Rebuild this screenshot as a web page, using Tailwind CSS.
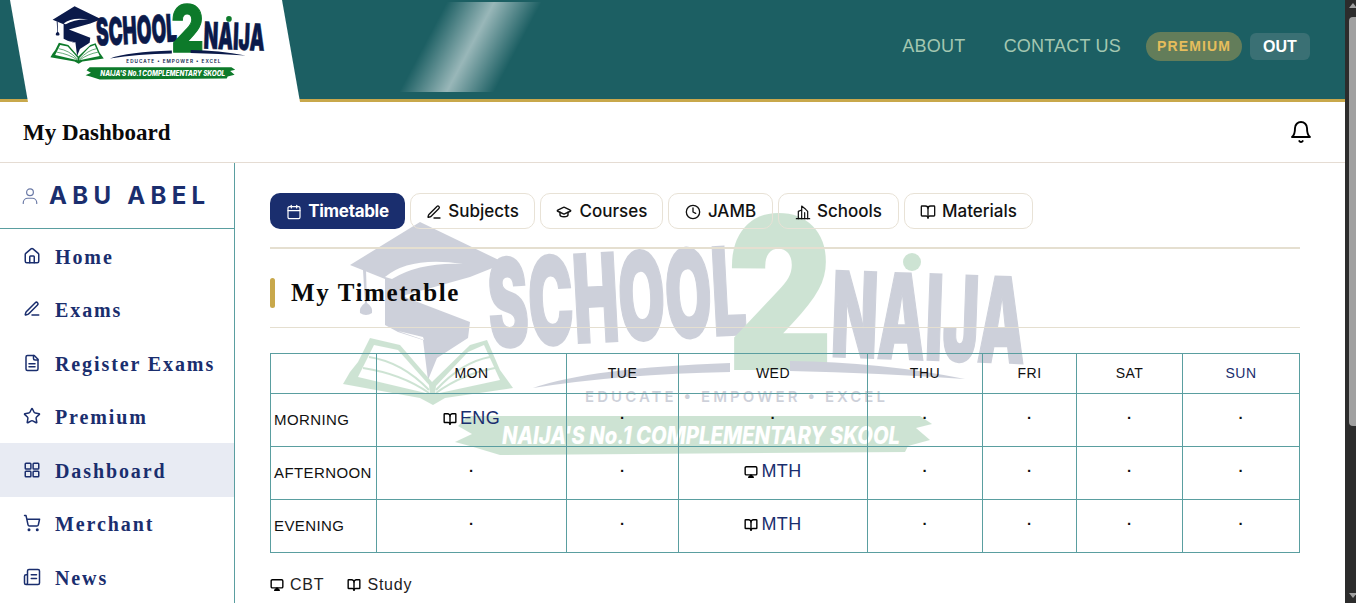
<!DOCTYPE html>
<html lang="en">
<head>
  <meta charset="UTF-8" />
  <meta name="viewport" content="width=device-width, initial-scale=1" />
  <title>My Dashboard</title>
  <script src="https://cdn.jsdelivr.net/npm/@tailwindcss/browser@4"></script>
</head>
<body class="h-[603px] overflow-hidden bg-white font-['Inter',sans-serif]">

  <!-- logo, used in the header and as the page watermark -->
  <svg class="hidden">
    <symbol id="logo" viewBox="340 205 695 255">
      <!-- cap and S body -->
      <path class="fill-[#0b1a4a]" d="M350 265 L420 222 L505 263 L470 277 L402 296 L470 322 L468 338 L437 358 L428 380 L423 340 L398 332 L385 325 L385 279 Z" />
      <path class="fill-white" d="M385 277 Q410 256 463 264 Q420 262 392 279 Z" />
      <path class="fill-white" d="M398 331 L423 337 L424 340 Z" />
      <path class="fill-[#0b1a4a]" d="M363 270 h3 l1 33 q6 4 5 10 q-6 4 -12 0 q-1 -6 5 -10 Z" />
      <!-- book -->
      <path class="fill-[#0d7a2a]" d="M370 338 L400 345 L432 382 L470 345 L487 340 L500 370 L513 388 L445 398 L433 405 L420 398 L343 384 L350 372 L358 362 Z" />
      <path class="fill-white" d="M374 345 L398 350 L429 385 L430 394 L358 377 Z" />
      <path class="fill-white" d="M484 345 L468 352 L436 386 L435 394 L500 380 Z" />
      <path fill="none" stroke="#0d7a2a" stroke-width="2" d="M369 357 Q402 362 429 390 M363 368 Q402 374 429 393 M490 357 Q462 362 436 390 M495 368 Q462 374 436 393" />
      <!-- wordmark -->
      <text x="488" y="342" textLength="258" lengthAdjust="spacingAndGlyphs" transform="rotate(-3 600 300)" class="fill-[#0b1a4a] stroke-[#0b1a4a] stroke-[2px]" font-family="Inter, sans-serif" font-weight="900" font-size="122">SCHOOL</text>
      <text x="728" y="368" textLength="104" lengthAdjust="spacingAndGlyphs" class="fill-[#0d7a2a] stroke-[#0d7a2a] stroke-[4px]" font-family="Inter, sans-serif" font-weight="900" font-size="208">2</text>
      <text x="832" y="360" textLength="194" lengthAdjust="spacingAndGlyphs" transform="rotate(2 930 310)" class="fill-[#0b1a4a] stroke-[#0b1a4a] stroke-[2px]" font-family="Inter, sans-serif" font-weight="900" font-size="118">NAIJA</text>
      <circle cx="912" cy="262" r="9" class="fill-[#0d7a2a]" />
      <!-- swoosh -->
      <path class="fill-[#0b1a4a]" d="M533 388 Q590 368 730 363 L730 372 Q620 374 533 388 Z" />
      <path class="fill-[#0b1a4a]" d="M790 361 Q880 362 965 379 Q880 373 790 371 Z" />
      <text x="585" y="402" textLength="300" class="fill-[#0b1a4a]" font-family="Inter, sans-serif" font-weight="600" font-size="15">EDUCATE • EMPOWER • EXCEL</text>
      <!-- banner -->
      <path class="fill-[#0d7a2a]" d="M468 416 L920 416 L932 424 L916 428 L930 440 L908 446 L905 452 L500 455 L470 446 L455 442 L472 434 L458 426 Z" />
      <text x="502" y="444" textLength="398" lengthAdjust="spacingAndGlyphs" class="fill-white" font-family="Inter, sans-serif" font-weight="800" font-style="italic" font-size="24">NAIJA'S No.1 COMPLEMENTARY SKOOL</text>
    </symbol>
  </svg>

  <div class="flex h-[603px]">
    <div class="relative flex min-w-0 flex-1 flex-col">

      <!-- top bar -->
      <header class="relative flex h-[102px] shrink-0 items-center justify-end border-b-[3px] border-[#c8a84b] bg-[#1c5f63] pr-[35px]">
        <div class="absolute left-[10px] top-0 h-[102px] w-[290px] bg-white [clip-path:polygon(0_0,272px_0,100%_100%,18px_100%)]"></div>
        <svg class="absolute left-[49px] top-[1px] h-[80px] w-[219px]"><use href="#logo" /></svg>
        <div class="absolute left-[423px] top-[2px] h-[90px] w-[95px] -skew-x-[28deg] bg-linear-to-r from-white/0 via-white/55 to-white/0"></div>
        <nav class="mb-[6px] flex items-center font-['Liberation_Sans',sans-serif]">
          <a class="text-[18px] tracking-[0.3px] text-[#a3c7b1]">ABOUT</a>
          <a class="ml-[38px] text-[18px] tracking-[0.2px] text-[#a3c7b1]">CONTACT US</a>
          <a class="ml-[25px] flex h-[29px] w-[96px] items-center justify-center rounded-full bg-[#637d5a] text-[14px] font-bold tracking-[1.1px] text-[#e6bd5c]">PREMIUM</a>
          <a class="ml-[8px] flex h-[27px] w-[60px] items-center justify-center rounded-md bg-[#3a7074] text-[16px] font-bold text-white">OUT</a>
        </nav>
      </header>

      <!-- page title -->
      <div class="flex h-[61px] shrink-0 items-center justify-between border-b border-[#e5dcd3] pl-[23px] pr-[32px]">
        <h1 class="pt-[3px] font-['Liberation_Serif',serif] text-[23px] font-bold text-[#0a0a0a]">My Dashboard</h1>
        <svg class="h-[24px] w-[24px]" viewBox="0 0 24 24" fill="none" stroke="#000" stroke-width="1.9" stroke-linecap="round" stroke-linejoin="round"><path d="M6 8a6 6 0 0 1 12 0c0 7 3 9 3 9H3s3-2 3-9" /><path d="M10.3 21a1.94 1.94 0 0 0 3.4 0" /></svg>
      </div>

      <div class="flex min-h-0 flex-1">
        <!-- sidebar -->
        <aside class="w-[235px] shrink-0 border-r border-[#5a9ea0] text-[#1a2e6e]">
          <div class="flex h-[66px] items-center gap-[10px] border-b border-[#5a9ea0] pl-[21px]">
            <svg class="h-[18px] w-[18px] text-[#6b7aa6]" viewBox="0 0 24 24" fill="none" stroke="currentColor" stroke-width="1.6" stroke-linecap="round"><circle cx="12" cy="7" r="4.5" /><path d="M3 22v-1a6 6 0 0 1 6-6h6a6 6 0 0 1 6 6v1" /></svg>
            <span class="pt-[1px] text-[24px] font-bold leading-none tracking-[5.3px]">ABU ABEL</span>
          </div>
          <ul class="font-['Liberation_Serif',serif] text-[20px] font-bold leading-none tracking-[1.9px]">
            <li class="flex h-[53.5px] items-center gap-[14px] pl-[23px]">
              <svg class="h-[18px] w-[18px]" viewBox="0 0 24 24" fill="none" stroke="currentColor" stroke-width="2" stroke-linecap="round" stroke-linejoin="round"><path d="M15 21v-8a1 1 0 0 0-1-1h-4a1 1 0 0 0-1 1v8" /><path d="M3 10a2 2 0 0 1 .709-1.528l7-5.999a2 2 0 0 1 2.582 0l7 5.999A2 2 0 0 1 21 10v9a2 2 0 0 1-2 2H5a2 2 0 0 1-2-2z" /></svg><span class="pt-[2px]">Home</span></li>
            <li class="flex h-[53.5px] items-center gap-[14px] pl-[23px]">
              <svg class="h-[18px] w-[18px]" viewBox="0 0 24 24" fill="none" stroke="currentColor" stroke-width="2" stroke-linecap="round" stroke-linejoin="round"><path d="M12 20h9" /><path d="M16.376 3.622a1 1 0 0 1 3.002 3.002L7.368 18.635a2 2 0 0 1-.855.506l-2.872.838a.5.5 0 0 1-.62-.62l.838-2.872a2 2 0 0 1 .506-.854z" /></svg><span class="pt-[2px]">Exams</span></li>
            <li class="flex h-[53.5px] items-center gap-[14px] pl-[23px]">
              <svg class="h-[18px] w-[18px]" viewBox="0 0 24 24" fill="none" stroke="currentColor" stroke-width="2" stroke-linecap="round" stroke-linejoin="round"><path d="M15 2H6a2 2 0 0 0-2 2v16a2 2 0 0 0 2 2h12a2 2 0 0 0 2-2V7Z" /><path d="M14 2v4a2 2 0 0 0 2 2h4" /><path d="M16 13H8" /><path d="M16 17H8" /></svg><span class="pt-[2px]">Register Exams</span></li>
            <li class="flex h-[53.5px] items-center gap-[14px] pl-[23px]">
              <svg class="h-[18px] w-[18px]" viewBox="0 0 24 24" fill="none" stroke="currentColor" stroke-width="2" stroke-linecap="round" stroke-linejoin="round"><path d="M11.525 2.295a.53.53 0 0 1 .95 0l2.31 4.679a2.123 2.123 0 0 0 1.595 1.16l5.166.756a.53.53 0 0 1 .294.904l-3.736 3.638a2.123 2.123 0 0 0-.611 1.878l.882 5.14a.53.53 0 0 1-.771.56l-4.618-2.428a2.122 2.122 0 0 0-1.973 0L6.396 21.01a.53.53 0 0 1-.77-.56l.881-5.139a2.122 2.122 0 0 0-.611-1.879L2.16 9.795a.53.53 0 0 1 .294-.906l5.165-.755a2.122 2.122 0 0 0 1.597-1.16z" /></svg><span class="pt-[2px]">Premium</span></li>
            <li class="flex h-[53.5px] items-center gap-[14px] bg-[#e8ebf3] pl-[23px]">
              <svg class="h-[18px] w-[18px]" viewBox="0 0 24 24" fill="none" stroke="currentColor" stroke-width="2"><rect x="3" y="3" width="7.5" height="7.5" rx="1" /><rect x="13.5" y="3" width="7.5" height="7.5" rx="1" /><rect x="3" y="13.5" width="7.5" height="7.5" rx="1" /><rect x="13.5" y="13.5" width="7.5" height="7.5" rx="1" /></svg><span class="pt-[2px]">Dashboard</span></li>
            <li class="flex h-[53.5px] items-center gap-[14px] pl-[23px]">
              <svg class="h-[18px] w-[18px]" viewBox="0 0 24 24" fill="none" stroke="currentColor" stroke-width="2" stroke-linecap="round" stroke-linejoin="round"><circle cx="8" cy="21" r="1" /><circle cx="19" cy="21" r="1" /><path d="M2.05 2.05h2l2.66 12.42a2 2 0 0 0 2 1.58h9.78a2 2 0 0 0 1.95-1.57l1.65-7.43H5.12" /></svg><span class="pt-[2px]">Merchant</span></li>
            <li class="flex h-[53.5px] items-center gap-[14px] pl-[23px]">
              <svg class="h-[18px] w-[18px]" viewBox="0 0 24 24" fill="none" stroke="currentColor" stroke-width="2" stroke-linecap="round" stroke-linejoin="round"><path d="M4 22h16a2 2 0 0 0 2-2V4a2 2 0 0 0-2-2H8a2 2 0 0 0-2 2v16a2 2 0 0 1-2 2Zm0 0a2 2 0 0 1-2-2v-9c0-1.1.9-2 2-2h2" /><path d="M11 9h7" /><path d="M11 14h7" /></svg><span class="pt-[2px]">News</span></li>
          </ul>
        </aside>

        <!-- main -->
        <main class="relative min-w-0 flex-1 pl-[35px] pr-[45px] pt-[30px]">
          <svg class="absolute left-[105px] top-[42px] h-[255px] w-[695px] opacity-20"><use href="#logo" /></svg>

          <div class="relative">
            <div class="flex gap-[5px] border-b-2 border-[#e5dfd0] pb-[18px] text-[17px] font-medium text-[#111]">
              <button class="flex h-[36px] w-[135px] items-center justify-center gap-[6px] rounded-[10px] bg-[#1a2e6e] pt-[2px] font-bold text-white">
                <svg class="h-[16px] w-[16px]" viewBox="0 0 24 24" fill="none" stroke="currentColor" stroke-width="1.8" stroke-linecap="round"><path d="M8 2v4" /><path d="M16 2v4" /><rect x="3" y="4" width="18" height="18" rx="2" /><path d="M3 10h18" /></svg><span class="tracking-[-0.3px]">Timetable</span></button>
              <button class="flex h-[36px] w-[125px] items-center justify-center gap-[6px] rounded-[10px] border border-[#e8e2d6] pt-[2px]">
                <svg class="h-[16px] w-[16px]" viewBox="0 0 24 24" fill="none" stroke="currentColor" stroke-width="2" stroke-linecap="round" stroke-linejoin="round"><path d="M12 21h9" /><path d="M16.376 3.622a1 1 0 0 1 3.002 3.002L7.368 18.635a2 2 0 0 1-.855.506l-2.872.838a.5.5 0 0 1-.62-.62l.838-2.872a2 2 0 0 1 .506-.854z" /></svg>Subjects</button>
              <button class="flex h-[36px] w-[123px] items-center justify-center gap-[8px] rounded-[10px] border border-[#e8e2d6] pt-[2px]">
                <svg class="h-[16px] w-[16px]" viewBox="0 0 24 24" fill="none" stroke="currentColor" stroke-width="2.2" stroke-linecap="round" stroke-linejoin="round"><path d="M21.42 10.922a1 1 0 0 0-.019-1.838L12.83 5.18a2 2 0 0 0-1.66 0L2.6 9.08a1 1 0 0 0 0 1.832l8.57 3.908a2 2 0 0 0 1.66 0z" /><path d="M6 12.5V16a6 3 0 0 0 12 0v-3.5" /></svg>Courses</button>
              <button class="flex h-[36px] w-[105px] items-center justify-center gap-[7px] rounded-[10px] border border-[#e8e2d6] pt-[2px]">
                <svg class="h-[16px] w-[16px]" viewBox="0 0 24 24" fill="none" stroke="currentColor" stroke-width="2" stroke-linecap="round" stroke-linejoin="round"><circle cx="12" cy="12" r="10" /><path d="M12 6v6l4 2" /></svg>JAMB</button>
              <button class="flex h-[36px] w-[121px] items-center justify-center gap-[6px] rounded-[10px] border border-[#e8e2d6] pt-[2px]">
                <svg class="h-[16px] w-[16px]" viewBox="0 0 24 24" fill="none" stroke="currentColor" stroke-width="1.8" stroke-linecap="round" stroke-linejoin="round"><path d="M2 22h20" /><path d="M5 22V11l5-2V3l6 5 3 3v11" /><path d="M10 9v13" /><path d="M14.500 13v9" /></svg>Schools</button>
              <button class="flex h-[36px] w-[129px] items-center justify-center gap-[6px] rounded-[10px] border border-[#e8e2d6] pt-[2px]">
                <svg class="h-[16px] w-[16px]" viewBox="0 0 24 24" fill="none" stroke="currentColor" stroke-width="2" stroke-linecap="round" stroke-linejoin="round"><path d="M12 7v14" /><path d="M3 18a1 1 0 0 1-1-1V4a1 1 0 0 1 1-1h5a4 4 0 0 1 4 4 4 4 0 0 1 4-4h5a1 1 0 0 1 1 1v13a1 1 0 0 1-1 1h-6a3 3 0 0 0-3 3 3 3 0 0 0-3-3z" /></svg>Materials</button>
            </div>

            <div class="flex h-[79px] items-center gap-[16px] border-b border-[#e5dfd0] pt-[10px]">
              <span class="h-[30px] w-[5px] rounded-sm bg-[#c8a84b]"></span>
              <h2 class="font-['Liberation_Serif',serif] text-[25px] font-bold tracking-[1.6px] text-[#0a0a0a]">My Timetable</h2>
            </div>

            <table class="mt-[25px] w-[1029px] table-fixed border-collapse font-['Liberation_Sans',sans-serif] text-[#111]">
              <colgroup>
                <col class="w-[106px]" /><col class="w-[190px]" /><col class="w-[112px]" /><col class="w-[189px]" /><col class="w-[115px]" /><col class="w-[94px]" /><col class="w-[106px]" /><col class="w-[117px]" />
              </colgroup>
              <thead>
                <tr class="h-[40px] text-center text-[14px] tracking-[0.5px]">
                  <th class="border border-[#5a9ea0] font-normal"></th>
                  <th class="border border-[#5a9ea0] font-normal">MON</th>
                  <th class="border border-[#5a9ea0] font-normal">TUE</th>
                  <th class="border border-[#5a9ea0] font-normal">WED</th>
                  <th class="border border-[#5a9ea0] font-normal">THU</th>
                  <th class="border border-[#5a9ea0] font-normal">FRI</th>
                  <th class="border border-[#5a9ea0] font-normal">SAT</th>
                  <th class="border border-[#5a9ea0] font-normal text-[#1a2e6e]">SUN</th>
                </tr>
              </thead>
              <tbody class="text-center text-[15px] font-bold">
                <tr class="h-[53px]">
                  <td class="border border-[#5a9ea0] pl-[3px] pt-[1px] text-left text-[15px] font-normal tracking-[0.4px]">MORNING</td>
                  <td class="border border-[#5a9ea0] pb-[1px] text-[18px] font-normal tracking-[0.4px] text-[#1a2e6e]"><span class="inline-flex items-center gap-[3px]"><svg class="h-[14px] w-[14px] text-black" viewBox="0 0 24 24" fill="none" stroke="currentColor" stroke-width="2.4" stroke-linecap="round" stroke-linejoin="round"><path d="M12 7v14" /><path d="M3 18a1 1 0 0 1-1-1V4a1 1 0 0 1 1-1h5a4 4 0 0 1 4 4 4 4 0 0 1 4-4h5a1 1 0 0 1 1 1v13a1 1 0 0 1-1 1h-6a3 3 0 0 0-3 3 3 3 0 0 0-3-3z" /></svg>ENG</span></td>
                  <td class="border border-[#5a9ea0] pb-[4px]">·</td>
                  <td class="border border-[#5a9ea0] pb-[4px]">·</td>
                  <td class="border border-[#5a9ea0] pb-[4px]">·</td>
                  <td class="border border-[#5a9ea0] pb-[4px]">·</td>
                  <td class="border border-[#5a9ea0] pb-[4px]">·</td>
                  <td class="border border-[#5a9ea0] pb-[4px]">·</td>
                </tr>
                <tr class="h-[53px]">
                  <td class="border border-[#5a9ea0] pl-[3px] pt-[1px] text-left text-[15px] font-normal tracking-[0.4px]">AFTERNOON</td>
                  <td class="border border-[#5a9ea0] pb-[4px]">·</td>
                  <td class="border border-[#5a9ea0] pb-[4px]">·</td>
                  <td class="border border-[#5a9ea0] pb-[1px] text-[18px] font-normal tracking-[0.4px] text-[#1a2e6e]"><span class="inline-flex items-center gap-[3px]"><svg class="h-[14px] w-[14px] text-black" viewBox="0 0 24 24" fill="none" stroke="currentColor" stroke-width="2.4" stroke-linejoin="round"><rect x="2" y="3" width="20" height="14" rx="2" /><path d="M8 21h8l-4-4z" fill="currentColor" /></svg>MTH</span></td>
                  <td class="border border-[#5a9ea0] pb-[4px]">·</td>
                  <td class="border border-[#5a9ea0] pb-[4px]">·</td>
                  <td class="border border-[#5a9ea0] pb-[4px]">·</td>
                  <td class="border border-[#5a9ea0] pb-[4px]">·</td>
                </tr>
                <tr class="h-[53px]">
                  <td class="border border-[#5a9ea0] pl-[3px] pt-[1px] text-left text-[15px] font-normal tracking-[0.4px]">EVENING</td>
                  <td class="border border-[#5a9ea0] pb-[4px]">·</td>
                  <td class="border border-[#5a9ea0] pb-[4px]">·</td>
                  <td class="border border-[#5a9ea0] pb-[1px] text-[18px] font-normal tracking-[0.4px] text-[#1a2e6e]"><span class="inline-flex items-center gap-[3px]"><svg class="h-[14px] w-[14px] text-black" viewBox="0 0 24 24" fill="none" stroke="currentColor" stroke-width="2.4" stroke-linecap="round" stroke-linejoin="round"><path d="M12 7v14" /><path d="M3 18a1 1 0 0 1-1-1V4a1 1 0 0 1 1-1h5a4 4 0 0 1 4 4 4 4 0 0 1 4-4h5a1 1 0 0 1 1 1v13a1 1 0 0 1-1 1h-6a3 3 0 0 0-3 3 3 3 0 0 0-3-3z" /></svg>MTH</span></td>
                  <td class="border border-[#5a9ea0] pb-[4px]">·</td>
                  <td class="border border-[#5a9ea0] pb-[4px]">·</td>
                  <td class="border border-[#5a9ea0] pb-[4px]">·</td>
                  <td class="border border-[#5a9ea0] pb-[4px]">·</td>
                </tr>
              </tbody>
            </table>

            <div class="mt-[20px] flex items-center gap-[23px] font-['Liberation_Sans',sans-serif] text-[16px] tracking-[0.8px] text-[#222]">
              <span class="flex items-center gap-[6px]"><svg class="h-[14px] w-[14px] text-black" viewBox="0 0 24 24" fill="none" stroke="currentColor" stroke-width="2.4" stroke-linejoin="round"><rect x="2" y="3" width="20" height="14" rx="2" /><path d="M8 21h8l-4-4z" fill="currentColor" /></svg>CBT</span>
              <span class="flex items-center gap-[6px]"><svg class="h-[14px] w-[14px] text-black" viewBox="0 0 24 24" fill="none" stroke="currentColor" stroke-width="2.4" stroke-linecap="round" stroke-linejoin="round"><path d="M12 7v14" /><path d="M3 18a1 1 0 0 1-1-1V4a1 1 0 0 1 1-1h5a4 4 0 0 1 4 4 4 4 0 0 1 4-4h5a1 1 0 0 1 1 1v13a1 1 0 0 1-1 1h-6a3 3 0 0 0-3 3 3 3 0 0 0-3-3z" /></svg>Study</span>
            </div>
          </div>
        </main>
      </div>
    </div>

    <!-- scrollbar -->
    <div class="relative w-[11px] shrink-0 bg-[#2c2c2c]">
      <div class="absolute left-[4px] top-[3px] h-0 w-0 border-x-[4px] border-b-[5px] border-x-transparent border-b-[#a0a0a0]"></div>
      <div class="absolute left-[4px] top-[17px] h-[409px] w-[7px] rounded-l-sm bg-[#a0a0a0]"></div>
      <div class="absolute bottom-[5px] left-[4px] h-0 w-0 border-x-[4px] border-t-[5px] border-x-transparent border-t-[#a0a0a0]"></div>
    </div>
  </div>
</body>
</html>
